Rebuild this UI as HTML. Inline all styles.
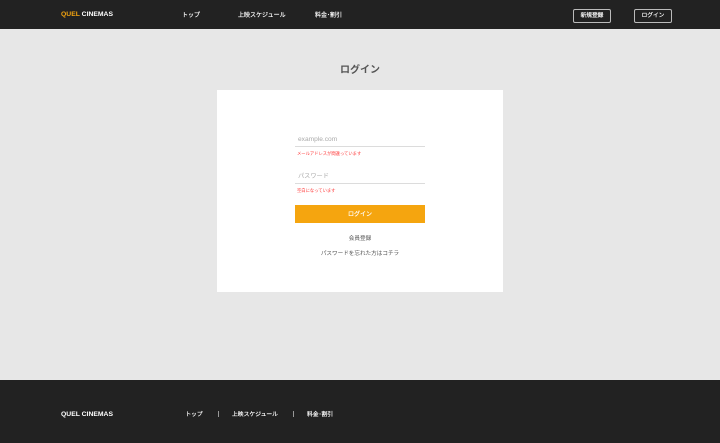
<!DOCTYPE html>
<html lang="ja"><head><meta charset="utf-8"><style>
*{box-sizing:border-box;margin:0;padding:0}
html,body{width:720px;height:443px;overflow:hidden;background:#e7e7e7;font-family:"Liberation Sans","Noto Sans CJK JP",sans-serif}
.a{position:absolute;white-space:nowrap;line-height:1}
.bar{position:absolute;left:0;width:720px;background:#222}
.w{color:#fff;font-weight:bold}
.n{color:#fff;font-weight:normal;-webkit-text-stroke:0.15px #fff}
.btn{position:absolute;top:9px;height:14px;border:1px solid #bbb;border-radius:2px;color:#fff;font-size:5.7px;line-height:13px;text-align:center;-webkit-text-stroke:0.15px #fff}
</style></head><body>
<div class="bar" style="top:0;height:29px"></div>
<div class="a w" style="left:61px;top:12px;font-size:6.8px"><span style="color:#f5a50f">QUEL</span> CINEMAS</div>
<div class="a n" style="left:182px;top:13px;font-size:6px">トップ</div>
<div class="a n" style="left:238px;top:13px;font-size:6px">上映スケジュール</div>
<div class="a n" style="left:315px;top:13px;font-size:6px">料金･割引</div>
<div class="btn" style="left:573px;width:38px">新規登録</div>
<div class="btn" style="left:634px;width:38px">ログイン</div>
<div class="a" style="left:0;width:720px;text-align:center;top:65.5px;font-size:10px;font-weight:bold;color:#555">ログイン</div>
<div style="position:absolute;left:217px;top:90px;width:286px;height:202px;background:#fff"></div>
<div class="a" style="left:298px;top:136.5px;font-size:6.6px;color:#aaa">example.com</div>
<div style="position:absolute;left:295px;top:146px;width:130px;height:1px;background:#dcdcdc"></div>
<div class="a" style="left:297px;top:152px;font-size:4.3px;color:#f33">メールアドレスが間違っています</div>
<div class="a" style="left:298px;top:173.5px;font-size:6.2px;color:#aaa">パスワード</div>
<div style="position:absolute;left:295px;top:183px;width:130px;height:1px;background:#dcdcdc"></div>
<div class="a" style="left:297px;top:188.5px;font-size:4.3px;color:#f33">空白になっています</div>
<div class="a n" style="left:295px;top:205px;width:130px;height:18px;background:#f5a50f;text-align:center;font-size:6px;line-height:20.5px">ログイン</div>
<div class="a" style="left:217px;width:286px;text-align:center;top:237px;font-size:5.6px;color:#555">会員登録</div>
<div class="a" style="left:217px;width:286px;text-align:center;top:252px;font-size:5.6px;color:#555">パスワードを忘れた方はコチラ</div>
<div class="bar" style="top:380px;height:63px"></div>
<div class="a w" style="left:61px;top:412px;font-size:6.8px">QUEL CINEMAS</div>
<div class="a n" style="left:185.5px;top:413px;font-size:5.7px">トップ</div>
<div style="position:absolute;left:217.5px;top:411px;width:1px;height:6px;background:#999"></div>
<div class="a n" style="left:232px;top:413px;font-size:5.8px">上映スケジュール</div>
<div style="position:absolute;left:292.5px;top:411px;width:1px;height:6px;background:#999"></div>
<div class="a n" style="left:307px;top:413px;font-size:5.8px">料金･割引</div>
</body></html>
